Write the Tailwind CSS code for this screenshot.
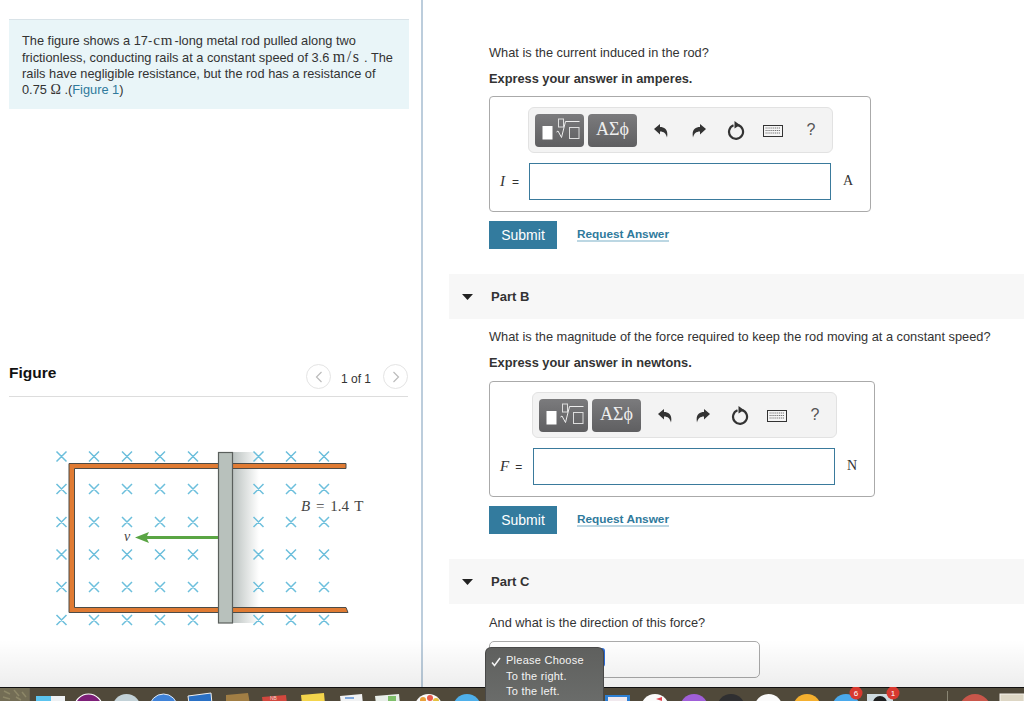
<!doctype html>
<html lang="en">
<head>
<meta charset="utf-8">
<title>Rod on rails</title>
<script src="https://cdn.jsdelivr.net/npm/@tailwindcss/browser@4"></script>
</head>
<body class="bg-white">
<div class="relative flex w-[1024px] h-[701px] overflow-hidden bg-white text-[#333] text-[12.8px] font-['Liberation_Sans',Arial,sans-serif]">

  <!-- left column -->
  <div class="w-[423px] shrink-0 border-r-[2px] border-[#bccddc]">
    <div class="ml-[9px] mt-[19px] w-[400px] h-[90px] bg-[#e9f5f8] border-t border-[#d9e3e8] pl-[13px] pt-[13px] text-[12.8px] leading-[16px]">
      The figure shows a 17-<span class="font-['Liberation_Serif',serif] text-[15px] leading-none tracking-[1px] ml-[1px] mr-[1px]">cm</span>-long metal rod pulled along two<br>
      frictionless, conducting rails at a constant speed of 3.6 <span class="font-['Liberation_Serif',serif] text-[16px] leading-none tracking-[1.5px]">m/s</span> . The<br>
      rails have negligible resistance, but the rod has a resistance of<br>
      0.75 <span class="font-['Liberation_Serif',serif] text-[14px] leading-none">Ω</span> .(<span class="text-[#2f7a9c]">Figure 1</span>)
    </div>
    <div class="ml-[9px] mt-[255px] w-[399px] h-[33px] border-b border-[#ddd] flex justify-between items-start">
      <div class="font-bold text-[15.5px] leading-[18px] text-[#111]">Figure</div>
      <div class="flex items-center gap-[10px]">
        <div class="w-[25px] h-[25px] rounded-full border border-[#e4e4e4] flex items-center justify-center">
          <svg width="8" height="12" viewBox="0 0 8 12" fill="none" stroke="#bbb" stroke-width="1.2"><path d="M6.5 1 L1.5 6 L6.5 11"/></svg>
        </div>
        <div class="text-[12px] leading-[16px] mt-[4px] w-[32px] text-[#333]">1 of 1</div>
        <div class="w-[25px] h-[25px] rounded-full border border-[#e4e4e4] flex items-center justify-center">
          <svg width="8" height="12" viewBox="0 0 8 12" fill="none" stroke="#bbb" stroke-width="1.2"><path d="M1.5 1 L6.5 6 L1.5 11"/></svg>
        </div>
      </div>
    </div>
    <svg class="block ml-[9px]" width="400" height="240" viewBox="9 397 400 240">
      <defs>
        <linearGradient id="shade" x1="0" x2="1" y1="0" y2="0">
          <stop offset="0" stop-color="#bcc3c1"/>
          <stop offset="1" stop-color="#ffffff"/>
        </linearGradient>
      </defs>
      <rect x="233" y="452" width="26" height="171" fill="url(#shade)"/>
      <path d="M346 463.5 H69 V612.5 H348 L346 607.5 H74.5 V468.5 H346 Z" fill="#e07b33" stroke="#4c4c48" stroke-width="1"/>
      <rect x="218.5" y="452.5" width="14" height="170.5" fill="#b8c1bc" stroke="#5a5f5c" stroke-width="1.2"/>
      <g stroke="#6cbfdc" stroke-width="1.5" fill="none">
        <path d="M56.500 451.500l10 10m0-10l-10 10M89 451.500l10 10m0-10l-10 10M122 451.500l10 10m0-10l-10 10M155 451.500l10 10m0-10l-10 10M188 451.500l10 10m0-10l-10 10M253.500 451.500l10 10m0-10l-10 10M286 451.500l10 10m0-10l-10 10M319 451.500l10 10m0-10l-10 10"/>
        <path d="M56.500 484l10 10m0-10l-10 10M89 484l10 10m0-10l-10 10M122 484l10 10m0-10l-10 10M155 484l10 10m0-10l-10 10M188 484l10 10m0-10l-10 10M253.500 484l10 10m0-10l-10 10M286 484l10 10m0-10l-10 10M319 484l10 10m0-10l-10 10"/>
        <path d="M56.500 517l10 10m0-10l-10 10M89 517l10 10m0-10l-10 10M122 517l10 10m0-10l-10 10M155 517l10 10m0-10l-10 10M188 517l10 10m0-10l-10 10M253.500 517l10 10m0-10l-10 10M286 517l10 10m0-10l-10 10M319 517l10 10m0-10l-10 10"/>
        <path d="M56.500 549.500l10 10m0-10l-10 10M89 549.500l10 10m0-10l-10 10M122 549.500l10 10m0-10l-10 10M155 549.500l10 10m0-10l-10 10M188 549.500l10 10m0-10l-10 10M253.500 549.500l10 10m0-10l-10 10M286 549.500l10 10m0-10l-10 10M319 549.500l10 10m0-10l-10 10"/>
        <path d="M56.500 582l10 10m0-10l-10 10M89 582l10 10m0-10l-10 10M122 582l10 10m0-10l-10 10M155 582l10 10m0-10l-10 10M188 582l10 10m0-10l-10 10M253.500 582l10 10m0-10l-10 10M286 582l10 10m0-10l-10 10M319 582l10 10m0-10l-10 10"/>
        <path d="M56.500 615l10 10m0-10l-10 10M89 615l10 10m0-10l-10 10M122 615l10 10m0-10l-10 10M155 615l10 10m0-10l-10 10M188 615l10 10m0-10l-10 10M253.500 615l10 10m0-10l-10 10M286 615l10 10m0-10l-10 10M319 615l10 10m0-10l-10 10"/>
      </g>
      <path d="M135 537.500 L149 532 L147 536 H218 V539 H147 L149 543 Z" fill="#5aa544"/>
      <text x="124" y="541" font-family="Liberation Serif" font-style="italic" font-size="14" fill="#444">v</text>
      <text x="301" y="511" font-family="Liberation Serif" font-size="15" word-spacing="2" fill="#444"><tspan font-style="italic">B</tspan> = 1.4 T</text>
    </svg>
  </div>

  <!-- right column -->
  <div class="flex-1 min-w-0 pl-[26px]">
    <!-- part A -->
    <div class="pl-[40px]">
      <div class="mt-[45px] h-[16px] leading-[16px]">What is the current induced in the rod?</div>
      <div class="mt-[10px] h-[16px] leading-[16px] font-bold">Express your answer in amperes.</div>
      <div class="mt-[9px] w-[382px] h-[116px] border border-[#aaa] rounded-[4px]">
        <div class="ml-[38px] mt-[10px] w-[305px] h-[46px] bg-[#f3f3f3] border border-[#e2e2e2] rounded-[6px] flex items-center pl-[6px]">
          <div class="w-[49px] h-[33px] rounded-[4px] bg-linear-to-b from-[#7b7b7d] to-[#5f5f61] flex items-center justify-center">
            <svg width="42" height="28" viewBox="0 0 42 28" fill="none">
              <rect x="3.500" y="10" width="10" height="13.500" fill="#fff"/>
              <rect x="19.500" y="3" width="5" height="8" stroke="#ddd" stroke-width="1"/>
              <path d="M17.500 16 L19 15 L22.500 21.500 L26.500 5.500 H40.500" stroke="#eee" stroke-width="1"/>
              <rect x="30.500" y="11.500" width="9.500" height="11" stroke="#ddd" stroke-width="1"/>
            </svg>
          </div>
          <div class="ml-[4px] w-[49px] h-[33px] rounded-[4px] bg-linear-to-b from-[#7b7b7d] to-[#5f5f61] flex items-center justify-center font-['Liberation_Serif',serif] text-[18px] text-[#eee] pb-[2px]">ΑΣϕ</div>
          <svg class="ml-[17px] mt-[1px]" width="14" height="14" viewBox="0 0 14 14" fill="#333"><path d="M0 5 L6 0 V3 C11 3 14.500 6 13 13.500 C12 9.500 10 7.500 6 7.500 V10.500 Z"/></svg>
          <svg class="ml-[24px] mt-[1px]" width="14" height="14" viewBox="0 0 14 14" fill="#333"><path d="M14 5 L8 0 V3 C3 3 -0.500 6 1 13.500 C2 9.500 4 7.500 8 7.500 V10.500 Z"/></svg>
          <svg class="ml-[21px] mt-[1px]" width="18" height="20" viewBox="0 0 18 20" fill="none"><path d="M6.500 4.300 A7 7 0 1 0 11 4.100" stroke="#333" stroke-width="2.200"/><path d="M7.500 0 L13 4 L7.500 7.500 Z" fill="#333"/></svg>
          <svg class="ml-[18px] mt-[2px]" width="20" height="12" viewBox="0 0 20 12"><rect x="0.500" y="0.500" width="19" height="11" fill="#f5f5f5" stroke="#333"/><path d="M2.500 3h15M2.500 5.500h15M2.500 8h15" stroke="#777" stroke-width="1.200" stroke-dasharray="1.200 0.700"/></svg>
          <div class="ml-[23px] w-[10px] text-center text-[16px] text-[#555]">?</div>
        </div>
        <div class="mt-[10px] flex items-center pl-[10px]">
          <div class="w-[29px] flex items-center"><i class="font-['Liberation_Serif',serif] text-[15px]">I</i><span class="ml-[7px] text-[12px]">=</span></div>
          <div class="w-[302px] h-[37px] border border-[#3a7a9c] bg-white"></div>
          <div class="ml-[12px] -mt-[2px] font-['Liberation_Serif',serif] text-[14px]">A</div>
        </div>
      </div>
      <div class="mt-[9px] flex items-center gap-[20px]">
        <div class="w-[68px] h-[28px] bg-[#337b9e] text-white text-[14px] flex items-center justify-center">Submit</div>
        <div class="font-bold text-[11.8px] leading-[12px] text-[#2f7a9c] border-b-[2px] border-[#bcd7e3]">Request Answer</div>
      </div>
    </div>

    <!-- part B -->
    <div class="mt-[25px] h-[45px] bg-[#f7f7f7] flex items-center pl-[13px]">
      <svg width="11" height="6" viewBox="0 0 11 6" fill="#222"><path d="M0 0 H11 L5.500 6 Z"/></svg>
      <div class="ml-[18px] font-bold text-[13px]">Part B</div>
    </div>
    <div class="pl-[40px]">
      <div class="mt-[10px] h-[16px] leading-[16px]">What is the magnitude of the force required to keep the rod moving at a constant speed?</div>
      <div class="mt-[10px] h-[16px] leading-[16px] font-bold">Express your answer in newtons.</div>
      <div class="mt-[10px] w-[386px] h-[116px] border border-[#aaa] rounded-[4px]">
        <div class="ml-[42px] mt-[10px] w-[305px] h-[46px] bg-[#f3f3f3] border border-[#e2e2e2] rounded-[6px] flex items-center pl-[6px]">
          <div class="w-[49px] h-[33px] rounded-[4px] bg-linear-to-b from-[#7b7b7d] to-[#5f5f61] flex items-center justify-center">
            <svg width="42" height="28" viewBox="0 0 42 28" fill="none">
              <rect x="3.500" y="10" width="10" height="13.500" fill="#fff"/>
              <rect x="19.500" y="3" width="5" height="8" stroke="#ddd" stroke-width="1"/>
              <path d="M17.500 16 L19 15 L22.500 21.500 L26.500 5.500 H40.500" stroke="#eee" stroke-width="1"/>
              <rect x="30.500" y="11.500" width="9.500" height="11" stroke="#ddd" stroke-width="1"/>
            </svg>
          </div>
          <div class="ml-[4px] w-[49px] h-[33px] rounded-[4px] bg-linear-to-b from-[#7b7b7d] to-[#5f5f61] flex items-center justify-center font-['Liberation_Serif',serif] text-[18px] text-[#eee] pb-[2px]">ΑΣϕ</div>
          <svg class="ml-[17px] mt-[1px]" width="14" height="14" viewBox="0 0 14 14" fill="#333"><path d="M0 5 L6 0 V3 C11 3 14.500 6 13 13.500 C12 9.500 10 7.500 6 7.500 V10.500 Z"/></svg>
          <svg class="ml-[24px] mt-[1px]" width="14" height="14" viewBox="0 0 14 14" fill="#333"><path d="M14 5 L8 0 V3 C3 3 -0.500 6 1 13.500 C2 9.500 4 7.500 8 7.500 V10.500 Z"/></svg>
          <svg class="ml-[21px] mt-[1px]" width="18" height="20" viewBox="0 0 18 20" fill="none"><path d="M6.500 4.300 A7 7 0 1 0 11 4.100" stroke="#333" stroke-width="2.200"/><path d="M7.500 0 L13 4 L7.500 7.500 Z" fill="#333"/></svg>
          <svg class="ml-[18px] mt-[2px]" width="20" height="12" viewBox="0 0 20 12"><rect x="0.500" y="0.500" width="19" height="11" fill="#f5f5f5" stroke="#333"/><path d="M2.500 3h15M2.500 5.500h15M2.500 8h15" stroke="#777" stroke-width="1.200" stroke-dasharray="1.200 0.700"/></svg>
          <div class="ml-[23px] w-[10px] text-center text-[16px] text-[#555]">?</div>
        </div>
        <div class="mt-[10px] flex items-center pl-[10px]">
          <div class="w-[33px] flex items-center"><i class="font-['Liberation_Serif',serif] text-[15px]">F</i><span class="ml-[6px] text-[12px]">=</span></div>
          <div class="w-[302px] h-[37px] border border-[#3a7a9c] bg-white"></div>
          <div class="ml-[12px] -mt-[2px] font-['Liberation_Serif',serif] text-[14px]">N</div>
        </div>
      </div>
      <div class="mt-[9px] flex items-center gap-[20px]">
        <div class="w-[68px] h-[28px] bg-[#337b9e] text-white text-[14px] flex items-center justify-center">Submit</div>
        <div class="font-bold text-[11.8px] leading-[12px] text-[#2f7a9c] border-b-[2px] border-[#bcd7e3]">Request Answer</div>
      </div>
    </div>

    <!-- part C -->
    <div class="mt-[25px] h-[45px] bg-[#f7f7f7] flex items-center pl-[13px]">
      <svg width="11" height="6" viewBox="0 0 11 6" fill="#222"><path d="M0 0 H11 L5.500 6 Z"/></svg>
      <div class="ml-[18px] font-bold text-[13px]">Part C</div>
    </div>
    <div class="pl-[40px]">
      <div class="mt-[11px] h-[16px] leading-[16px]">And what is the direction of this force?</div>
      <div class="mt-[10px] w-[271px] h-[37px] border border-[#aaa] rounded-[5px]"></div>
    </div>
  </div>

  <!-- window shadow falling from the dock -->
  <div class="absolute left-0 right-0 top-[640px] h-[47px] bg-linear-to-b from-transparent to-black/[0.07] pointer-events-none"></div>

  <!-- dock -->
  <svg class="absolute left-0 top-[687px]" width="1024" height="14" viewBox="0 687 1024 14">
    <rect x="0" y="687" width="1024" height="14" fill="#50493a"/>
    <rect x="0" y="688" width="29" height="13" fill="#736d55"/>
    <path d="M4 691l6 3M14 690l5 6M22 692l4 5M3 697l7 2M16 697l5 3" stroke="#8d8768" stroke-width="1.500"/>
    <rect x="29" y="688" width="1" height="13" fill="#6a6452"/>
    <rect x="0" y="687" width="1024" height="1" fill="#111"/>
    <rect x="36" y="696" width="15" height="8" fill="#5cc4ef"/><rect x="51" y="696" width="14" height="8" fill="#eef1f4"/>
    <circle cx="88.500" cy="708" r="14" fill="#7d1f78" stroke="#fff" stroke-width="1.200"/>
    <circle cx="126.500" cy="708" r="14" fill="#c3d2d8"/>
    <circle cx="163.500" cy="708" r="14" fill="#3f82d8" stroke="#dfe9f5" stroke-width="1"/>
    <path d="M188 696 L211 693 L212 704 L189 704 Z" fill="#2a70c4" stroke="#eee"/>
    <path d="M226 695 L248 693 L250 704 L226 704 Z" fill="#a17e44"/>
    <path d="M262 697 L286 695 L287 704 L263 704 Z" fill="#d2483e"/>
    <text x="270" y="700" font-family="Liberation Sans" font-size="5" fill="#f3d6d0">NB</text>
    <path d="M301 695 L324 693 L325 704 L302 704 Z" fill="#f4d54c"/>
    <path d="M340 696 L362 694 L363 704 L341 704 Z" fill="#f1f2f3"/><path d="M345 698h9" stroke="#5a8fd4" stroke-width="1.500"/>
    <path d="M375 696 L399 694 L400 704 L376 704 Z" fill="#e8eee9"/><rect x="388" y="696" width="8" height="8" fill="#7fbf6a"/>
    <circle cx="428.500" cy="708" r="14" fill="#fafafa"/>
    <circle cx="423" cy="700" r="3" fill="#e8a13a"/><circle cx="430" cy="698" r="3" fill="#ea5b4a"/><circle cx="436" cy="701" r="3" fill="#e5c13f"/>
    <circle cx="467" cy="708" r="14" fill="#4fb0ea"/>
    <rect x="605" y="695" width="25" height="9" fill="#2d7fd3"/><rect x="608" y="697" width="19" height="7" fill="#f1e9ee"/>
    <circle cx="655" cy="708" r="14" fill="#fbfbfb"/><path d="M656 699l6-2v4z" fill="#e0434f"/>
    <circle cx="694" cy="708" r="14" fill="#a05fd8"/>
    <circle cx="731" cy="708" r="14" fill="#2f2f31"/>
    <circle cx="768.500" cy="708" r="14" fill="#fbfbfb"/>
    <circle cx="807" cy="708" r="14" fill="#f5b02f"/>
    <circle cx="846" cy="708" r="14" fill="#4aa9ec"/>
    <rect x="867" y="694" width="26" height="10" fill="#cfdbe0"/><circle cx="880" cy="703" r="7" fill="#1f1f1f"/>
    <circle cx="856" cy="693" r="6.500" fill="#d8392f"/>
    <text x="856" y="696" text-anchor="middle" font-family="Liberation Sans" font-size="8" fill="#fff">6</text>
    <circle cx="893" cy="693" r="6.500" fill="#d8392f"/>
    <text x="893" y="696" text-anchor="middle" font-family="Liberation Sans" font-size="8" fill="#fff">1</text>
    <rect x="947" y="691" width="1" height="10" fill="#8a8674"/>
    <circle cx="975" cy="710" r="16" fill="#c9564a"/>
    <rect x="1000" y="694" width="24" height="10" fill="#ddd6c4" stroke="#f5f2ea"/>
  </svg>

  <!-- open native select menu -->
  <div class="absolute left-[600px] top-[648px] w-[5px] h-[19px] rounded-r-[3px] bg-[#2a6bd8]"></div>
  <div class="absolute left-[485px] top-[647px] w-[119px] h-[60px] rounded-[6px] bg-linear-to-b from-[#5f605e] to-[#6b6d6b] border border-[#3c3c3c]/70 pl-[20px] pt-[5px] text-[11px] leading-[15.7px] tracking-[0.25px] text-[#f4f4f4]">
    <svg class="absolute left-[5px] top-[9px]" width="10" height="10" viewBox="0 0 10 10" fill="none" stroke="#f4f4f4" stroke-width="1.500"><path d="M1 5.500 L3.500 8.500 L9 1"/></svg>
    <div>Please Choose</div>
    <div>To the right.</div>
    <div>To the left.</div>
  </div>
</div>
</body>
</html>
